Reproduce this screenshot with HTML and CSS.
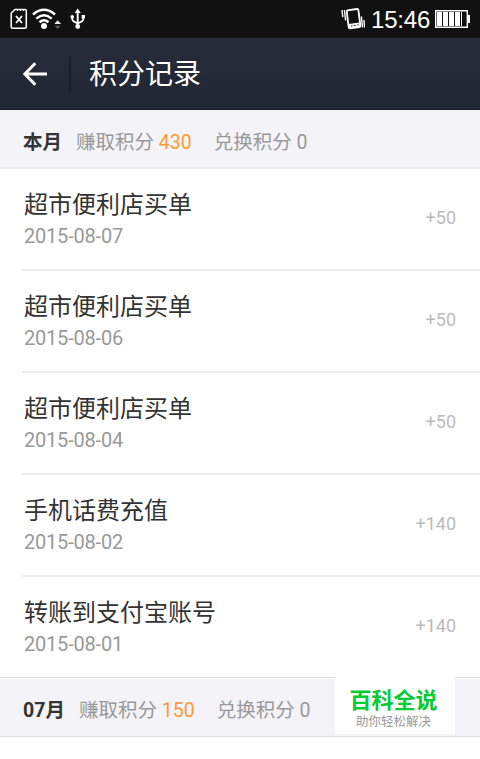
FILE: index.html
```html
<!DOCTYPE html>
<html lang="zh-CN">

<head>
    <meta charset="UTF-8">
    <meta name="viewport" content="width=device-width, initial-scale=1.0">
    <title>积分记录</title>
    <link rel="stylesheet" href="styles.css">
</head>

<body>
    <!-- 状态栏 -->
    <div class="status">
        <svg class="status-left" width="90" height="38" viewBox="0 0 90 38">
            <path d="M15 9.5h10q1.3 0 1.3 1.3v16q0 1.5-1.5 1.5H12.7q-1.5 0-1.5-1.5V13z" fill="none" stroke="#fff" stroke-width="1.5"/>
            <path d="M17.5 9v2M20.5 9v2M23.5 9v2" stroke="#fff"/>
            <path d="M16 16l6 7M22 16l-6 7" stroke="#fff" stroke-width="1.8"/>
            <path d="M33 14.5q11-9.5 22 0M36.3 18.6q7.7-6.7 15.4 0M39.5 22.3q4.5-4 9 0" fill="none" stroke="#fff" stroke-width="2.5"/>
            <circle cx="44" cy="26" r="3" fill="#fff"/>
            <path d="M54.3 24l3.4-3.7 3.4 3.7z" fill="#eee"/>
            <path d="M54.5 25.7h6.4l-3.2 3.3z" fill="#555"/>
            <path d="M77.7 12v14M72.3 17v2q0 2.5 5.4 4.3M83.2 17v2q0 2.5-5.4 4.3" fill="none" stroke="#fff" stroke-width="1.9"/>
            <path d="M74.7 13l3-4.4 3 4.4z" fill="#fff"/>
            <circle cx="72.2" cy="16.8" r="1.8" fill="#fff"/>
            <path d="M81.6 15h3.4v3.4h-3.4z" fill="#fff"/>
            <circle cx="77.7" cy="26.5" r="2.4" fill="#fff"/>
        </svg>
        <div class="status-right">
            <svg width="24" height="38" viewBox="0 0 24 38">
                <path d="M6.5 10.3l9.3-1.3q1.4-.1 1.6 1.1l2 15.5q.1 1.3-1.2 1.5l-9 1.2q-1.3.1-1.5-1.2L5.8 12q-.1-1.5.7-1.7z" fill="none" stroke="#fff" stroke-width="1.8"/>
                <path d="M7.5 24l11.3-1.5.6 4.2-11 1.5z" fill="#fff"/>
                <path d="M10 26l1.6-.2M13.2 25.5l1.6-.2M16.3 25l1.3-.2" stroke="#111"/>
                <path d="M1 10l.8 7M3.4 10l1.2 10.5M20.4 16.5l1.1 11M22.9 20l.7 7.5" stroke="#fff" stroke-width="1.4"/>
            </svg>
            <span class="time">15:46</span>
            <svg width="36" height="38" viewBox="0 0 36 38">
                <path d="M.7 10.7h31.6v16.6H.7z" fill="none" stroke="#fff" stroke-width="1.4"/>
                <path d="M33 15h2v8h-2z" fill="#fff"/>
                <path d="M2 12h5v14H2zM8 12h5v14H8zM14 12h5v14h-5zM20 12h5v14h-5zM26 12h1v14h-1z" fill="#fff"/>
            </svg>
        </div>
    </div>

    <!-- 标题栏 -->
    <div class="header">
        <svg class="back" width="24" height="24" viewBox="0 0 24 24">
            <path d="M12.3 1.3L1.8 12l10.5 10.7M1.8 12H24" fill="none" stroke="#fff" stroke-width="3"/>
        </svg>
        <h1 class="title">积分记录</h1>
    </div>

    <div class="month">
        <span class="month-name">本月</span>
        <span class="earn">赚取积分 <em>430</em></span>
        <span class="spend">兑换积分 0</span>
    </div>
    <ul class="list">
        <li class="item">
            <div class="info">
                <p class="name">超市便利店买单</p>
                <p class="date">2015-08-07</p>
            </div>
            <span class="score">+50</span>
        </li>
        <li class="item">
            <div class="info">
                <p class="name">超市便利店买单</p>
                <p class="date">2015-08-06</p>
            </div>
            <span class="score">+50</span>
        </li>
        <li class="item">
            <div class="info">
                <p class="name">超市便利店买单</p>
                <p class="date">2015-08-04</p>
            </div>
            <span class="score">+50</span>
        </li>
        <li class="item">
            <div class="info">
                <p class="name">手机话费充值</p>
                <p class="date">2015-08-02</p>
            </div>
            <span class="score">+140</span>
        </li>
        <li class="item">
            <div class="info">
                <p class="name">转账到支付宝账号</p>
                <p class="date">2015-08-01</p>
            </div>
            <span class="score">+140</span>
        </li>
    </ul>
    <div class="month month-prev">
        <span class="month-name">07月</span>
        <span class="earn">赚取积分 <em>150</em></span>
        <span class="spend">兑换积分 0</span>
    </div>

    <!-- 右下角标识 -->
    <div class="mark">
        <p class="mark-name">百科全说</p>
        <p class="mark-des">助你轻松解决</p>
    </div>
</body>

</html>
```
FILE: styles.css
```css
* {
    margin: 0;
    padding: 0;
    box-sizing: border-box;
}

body {
    position: relative;
    width: 480px;
    height: 759px;
    overflow: hidden;
    background: #fff;
    font-family: Roboto, "Noto Sans CJK SC", sans-serif;
    color: #333;
}

svg {
    display: block;
    flex-shrink: 0;
}

ul>li {
    list-style: none;
}

em {
    font-style: normal;
}

/* 状态栏 */
.status {
    display: flex;
    justify-content: space-between;
    height: 38px;
    background: #111;
}

.status-right {
    display: flex;
    padding-right: 9px;
}

.time {
    width: 70px;
    padding-left: 6px;
    font-family: "Liberation Sans", sans-serif;
    font-size: 24px;
    line-height: 40px;
    letter-spacing: -0.2px;
    color: #fff;
}

/* 标题栏 */
.header {
    display: flex;
    align-items: center;
    height: 72px;
    padding-left: 23px;
    background: linear-gradient(#282c3b, #202632);
    border-bottom: 1px solid #191d2b;
}

.title {
    height: 36px;
    margin-left: 22px;
    padding-left: 18px;
    border-left: 2px solid #1a1d2b;
    font-size: 28px;
    font-weight: 400;
    line-height: 38px;
    color: #fff;
}

/* 月份汇总 */
.month {
    display: flex;
    height: 59px;
    padding-left: 23px;
    background: #f4f3f8;
    border-bottom: 2px solid #ededef;
    font-size: 19.5px;
    line-height: 66px;
    white-space: nowrap;
    color: #999;
}

.month-name {
    margin-right: 14px;
    font-weight: 700;
    color: #333;
}

.earn {
    margin-right: 22px;
}

.earn em {
    color: #ff9933;
}

.month-prev {
    line-height: 64px;
    border-top: 1px solid #fff;
    border-bottom: 1px solid #dfdfe1;
}

/* 积分列表 */
.list {
    border-bottom: 1px solid #dfdfe1;
}

.item {
    display: flex;
    justify-content: space-between;
    height: 102px;
    margin-left: 22px;
    padding: 17px 24px 0 2px;
    border-bottom: 2px solid #eee;
}

.item:last-child {
    height: 100px;
    border-bottom: 0;
}

.name {
    height: 34px;
    font-size: 24px;
    line-height: 38px;
}

.date {
    font-size: 20px;
    line-height: 32px;
    letter-spacing: -0.2px;
    color: #999;
}

.score {
    font-size: 18px;
    line-height: 64px;
    color: #bbb;
}

/* 右下角标识 */
.mark {
    position: absolute;
    left: 335px;
    top: 674px;
    width: 120px;
    height: 60px;
    padding: 12px 3px 0 0;
    background: #fff;
    text-align: center;
}

.mark-name {
    font-size: 22px;
    font-weight: 700;
    line-height: 30px;
    color: #00cc33;
}

.mark-des {
    font-size: 12.5px;
    line-height: 11px;
    color: #999;
}
```
